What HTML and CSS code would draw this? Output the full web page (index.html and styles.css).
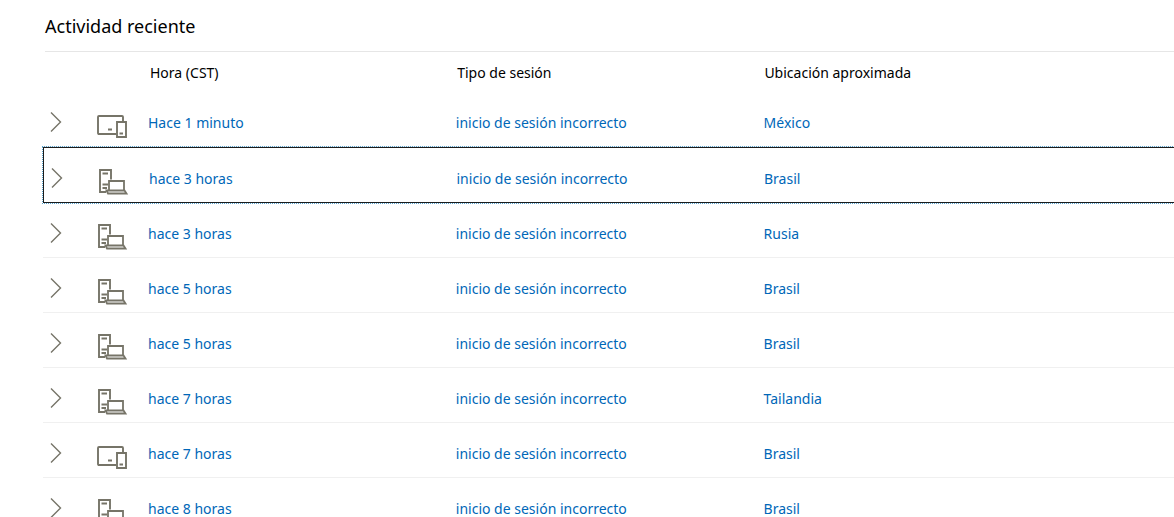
FILE: index.html
```html
<!DOCTYPE html>
<html lang="es">
<head>
    <meta charset="UTF-8">
    <meta name="viewport" content="width=device-width, initial-scale=1.0">
    <title>Actividad reciente</title>
    <link rel="stylesheet" href="styles.css">
</head>
<body>
    <!-- Iconos -->
    <svg class="sprite" aria-hidden="true">
        <symbol id="chevron" viewBox="0 0 12 22">
            <path d="M1 1.5L10.5 11L1 20.5" fill="none" stroke="currentColor" stroke-width="1.4"/>
        </symbol>
        <symbol id="movil" viewBox="0 0 31 26">
            <path d="M19 21H2Q1 21 1 20V4Q1 3 2 3H25Q26 3 26 4V8M11 16.5H15M22.5 20.5H26" fill="none" stroke="currentColor" stroke-width="1.9"/>
            <path d="M20 9H29V24H20Z" fill="none" stroke="currentColor" stroke-width="1.9"/>
        </symbol>
        <symbol id="equipo" viewBox="0 0 31 26">
            <path d="M8 23H2V1H13V10.5M4.5 4.5H10M4.5 15.5H10M4.5 19H9" fill="none" stroke="currentColor" stroke-width="1.9"/>
            <path d="M11 21V12H26V21M8.5 21.5H26.5L28.5 24.5H10Z" fill="none" stroke="currentColor" stroke-width="1.8"/>
        </symbol>
    </svg>

    <main class="activity">
        <h1>Actividad reciente</h1>
        <table>
            <thead>
                <tr>
                    <th scope="col">Hora (CST)</th>
                    <th scope="col">Tipo de sesión</th>
                    <th scope="col">Ubicación aproximada</th>
                </tr>
            </thead>
            <tbody>
                <tr>
                    <td class="device">
                        <button type="button" aria-label="Mostrar detalles"><svg class="chevron"><use href="#chevron"/></svg></button>
                        <svg class="icon"><use href="#movil"/></svg>
                    </td>
                    <td>Hace 1 minuto</td>
                    <td>inicio de sesión incorrecto</td>
                    <td>México</td>
                </tr>
                <tr class="selected">
                    <td class="device">
                        <button type="button" aria-label="Mostrar detalles"><svg class="chevron"><use href="#chevron"/></svg></button>
                        <svg class="icon"><use href="#equipo"/></svg>
                    </td>
                    <td>hace 3 horas</td>
                    <td>inicio de sesión incorrecto</td>
                    <td>Brasil</td>
                </tr>
                <tr>
                    <td class="device">
                        <button type="button" aria-label="Mostrar detalles"><svg class="chevron"><use href="#chevron"/></svg></button>
                        <svg class="icon"><use href="#equipo"/></svg>
                    </td>
                    <td>hace 3 horas</td>
                    <td>inicio de sesión incorrecto</td>
                    <td>Rusia</td>
                </tr>
                <tr>
                    <td class="device">
                        <button type="button" aria-label="Mostrar detalles"><svg class="chevron"><use href="#chevron"/></svg></button>
                        <svg class="icon"><use href="#equipo"/></svg>
                    </td>
                    <td>hace 5 horas</td>
                    <td>inicio de sesión incorrecto</td>
                    <td>Brasil</td>
                </tr>
                <tr>
                    <td class="device">
                        <button type="button" aria-label="Mostrar detalles"><svg class="chevron"><use href="#chevron"/></svg></button>
                        <svg class="icon"><use href="#equipo"/></svg>
                    </td>
                    <td>hace 5 horas</td>
                    <td>inicio de sesión incorrecto</td>
                    <td>Brasil</td>
                </tr>
                <tr>
                    <td class="device">
                        <button type="button" aria-label="Mostrar detalles"><svg class="chevron"><use href="#chevron"/></svg></button>
                        <svg class="icon"><use href="#equipo"/></svg>
                    </td>
                    <td>hace 7 horas</td>
                    <td>inicio de sesión incorrecto</td>
                    <td>Tailandia</td>
                </tr>
                <tr>
                    <td class="device">
                        <button type="button" aria-label="Mostrar detalles"><svg class="chevron"><use href="#chevron"/></svg></button>
                        <svg class="icon"><use href="#movil"/></svg>
                    </td>
                    <td>hace 7 horas</td>
                    <td>inicio de sesión incorrecto</td>
                    <td>Brasil</td>
                </tr>
                <tr>
                    <td class="device">
                        <button type="button" aria-label="Mostrar detalles"><svg class="chevron"><use href="#chevron"/></svg></button>
                        <svg class="icon"><use href="#equipo"/></svg>
                    </td>
                    <td>hace 8 horas</td>
                    <td>inicio de sesión incorrecto</td>
                    <td>Brasil</td>
                </tr>
            </tbody>
        </table>
    </main>
</body>
</html>
```
FILE: styles.css
```css
* {
    box-sizing: border-box;
}
body {
    margin: 0;
    background: #fff;
    color: #000;
    font-family: "Segoe UI", "Noto Sans", sans-serif;
    font-size: 14px;
    line-height: 20px;
    overflow-x: hidden;
}
.sprite {
    display: none;
}
.activity {
    padding: 12px 0 0 43px;
}
h1 {
    margin: 0 0 0 2px;
    padding-bottom: 11px;
    border-bottom: 1px solid #e6e6e6;
    font-size: 18px;
    font-weight: 400;
    line-height: 28px;
}
table, thead, tbody {
    display: block;
}
tr {
    display: grid;
    grid-template-columns: 105px 3fr 3fr 4fr;
}
th, td {
    padding: 0;
    text-align: left;
    font-weight: 400;
}
thead tr {
    margin-left: 2px;
    padding: 11px 0 9px;
}
thead th:first-child {
    grid-column: 2;
}
tbody tr {
    min-height: 55px;
    border-bottom: 1px solid #f0f0f0;
    color: #0067b8;
}
tbody td {
    padding-top: 21px;
}
/* Fila con el foco */
tbody .selected {
    min-height: 56px;
    border: 1px solid #1b1b1b;
    border-right: none;
    outline: 1px dotted #5aa5cf;
}
tbody .device {
    display: flex;
    align-items: flex-start;
    gap: 35px;
    padding: 19px 0 0 7px;
    color: #767468;
}
.device button {
    display: flex;
    padding: 0;
    border: none;
    background: none;
    color: inherit;
    cursor: pointer;
}
.chevron {
    width: 12px;
    height: 22px;
}
.icon {
    width: 31px;
    height: 26px;
    margin-top: 2px;
}
```
